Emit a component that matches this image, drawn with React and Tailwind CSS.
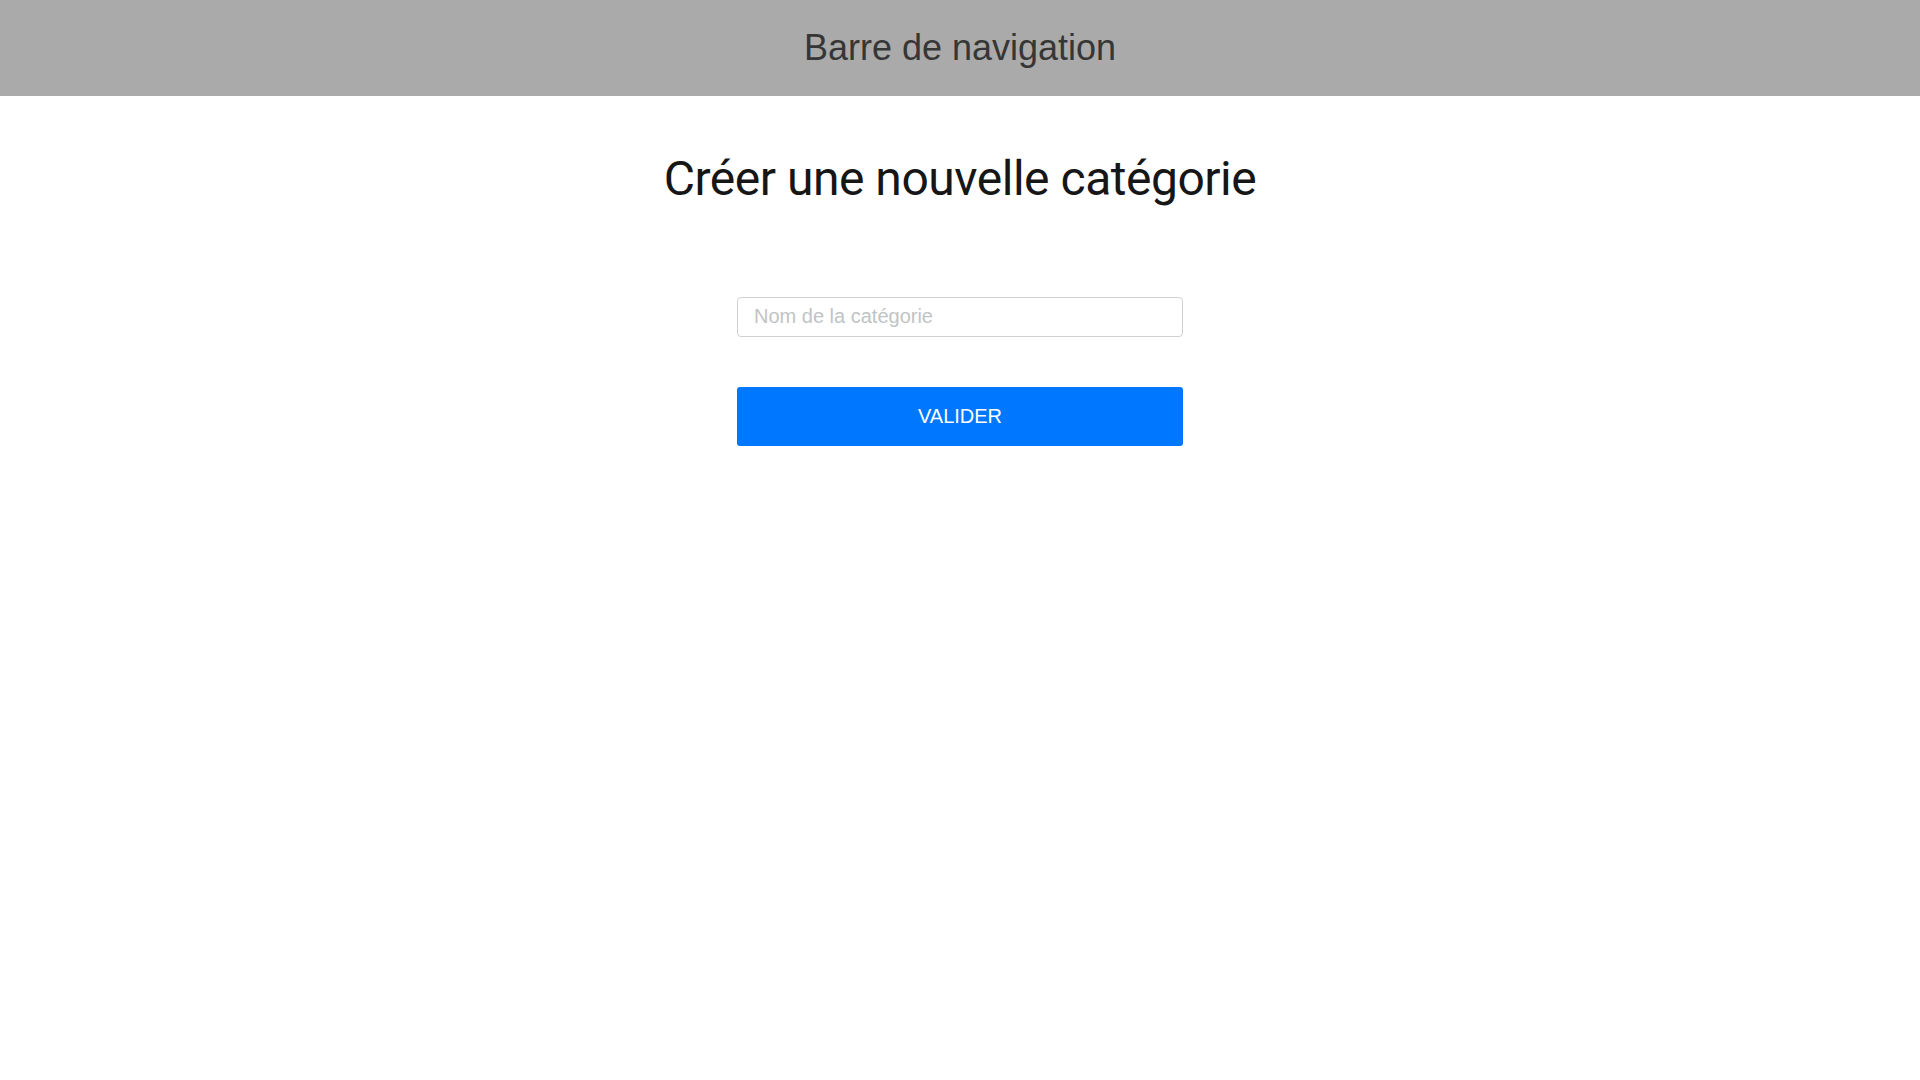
import React from 'react'

export default function App() {
  return (
    <div className="min-h-screen bg-white font-['Liberation_Sans',Arial,sans-serif]">
      <nav className="flex h-[96px] items-center justify-center bg-[#aaaaaa]">
        <span className="text-[36px] text-[#363636]">Barre de navigation</span>
      </nav>

      <main className="flex flex-col items-center">
        <h1 className="mt-[54px] font-['Roboto',sans-serif] text-[48px] leading-[1.2] font-normal tracking-[-0.01em] text-[#161616]">
          Créer une nouvelle catégorie
        </h1>

        <form className="mt-[89px] flex w-[446px] flex-col">
          <input
            type="text"
            placeholder="Nom de la catégorie"
            className="h-[40px] w-full rounded-[4px] border border-[#d0d0d0] px-4 text-[20px] text-[#333] placeholder:text-[#bfc4c4] focus:outline-none"
          />
          <button
            type="button"
            className="mt-[50px] h-[59px] w-full rounded-[3px] bg-[#0077ff] text-[20px] text-white"
          >
            VALIDER
          </button>
        </form>
      </main>
    </div>
  )
}
